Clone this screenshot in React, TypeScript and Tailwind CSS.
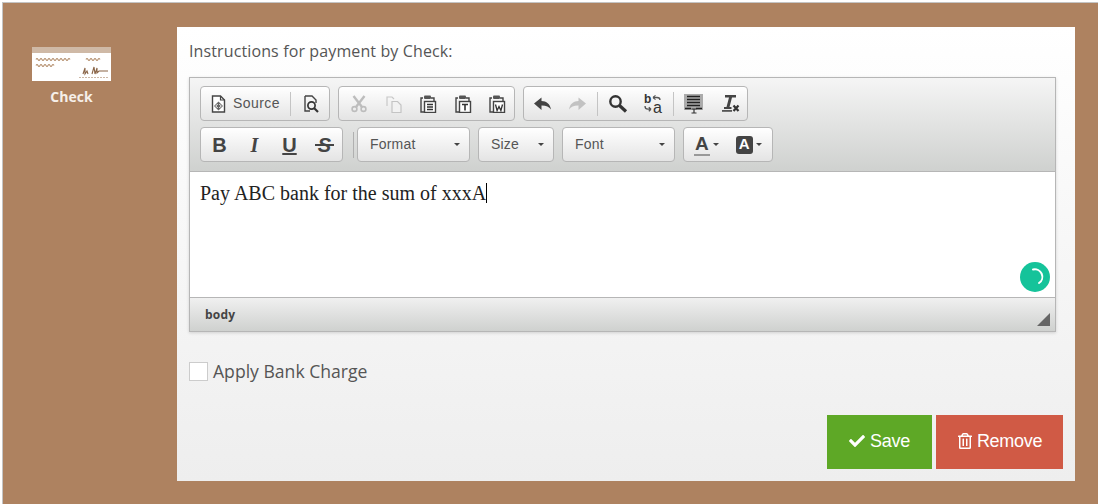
import type { ReactNode } from 'react';
import { FaCheck, FaRegTrashAlt } from 'react-icons/fa';

const groupClass =
  'flex h-[35px] items-center rounded-[4px] border border-[#b6b6b6] bg-gradient-to-b from-white to-[#e4e4e4]';

function Ico({ children, w = 18, h = 18, className = '' }: { children: ReactNode; w?: number; h?: number; className?: string }) {
  return (
    <svg width={w} height={h} viewBox={`0 0 ${w} ${h}`} className={`shrink-0 ${className}`}>
      {children}
    </svg>
  );
}

function Sep() {
  return <div className="h-[24px] w-px bg-[#c4c4c4]" />;
}

function SourceIcon() {
  return (
    <Ico w={15} h={18}>
      <path d="M1.5 1h8l4 4v12h-12z" fill="#fff" stroke="#444" strokeWidth="1.4" />
      <path d="M9.5 1v4h4" fill="none" stroke="#444" strokeWidth="1.2" />
      <path d="M7.5 6.5l4.5 4.5-4.5 4.5-4.5-4.5z" fill="#666" />
      <path d="M6.7 9l-2 2 2 2M8.3 9l2 2-2 2" fill="none" stroke="#fff" strokeWidth="1" />
    </Ico>
  );
}

function PreviewIcon() {
  return (
    <Ico w={18} h={18}>
      <path d="M3 1h7l4 4v3M3 1v15h5" fill="none" stroke="#444" strokeWidth="1.4" />
      <circle cx="9.5" cy="10.5" r="3.6" fill="none" stroke="#333" strokeWidth="1.7" />
      <path d="M12 13l4 4" stroke="#333" strokeWidth="2.2" />
    </Ico>
  );
}

function CutIcon() {
  return (
    <Ico>
      <path d="M3.5 1l8.5 11M14.5 1L6 12" stroke="#bdbdbd" strokeWidth="2.4" />
      <circle cx="4.5" cy="14" r="2.4" fill="none" stroke="#bdbdbd" strokeWidth="1.6" />
      <circle cx="13.5" cy="14" r="2.4" fill="none" stroke="#bdbdbd" strokeWidth="1.6" />
    </Ico>
  );
}

function CopyIcon() {
  return (
    <Ico>
      <path d="M2 11V2h5l2 2" fill="none" stroke="#c8c8c8" strokeWidth="1.2" />
      <path d="M7 6.5h5.5l3.5 3.5v7.5h-9z" fill="#f2f2f2" stroke="#c4c4c4" strokeWidth="1.2" />
    </Ico>
  );
}

function PasteIcon({ mark }: { mark: 'lines' | 'T' | 'W' }) {
  return (
    <Ico>
      <path d="M4 3H2v14h3" fill="none" stroke="#444" strokeWidth="1.4" />
      <path d="M12 3h3v3" fill="none" stroke="#444" strokeWidth="1.4" />
      <rect x="5" y="0.5" width="7" height="3.5" rx="1" fill="#555" />
      <rect x="5.5" y="6.5" width="11" height="11" fill="#fff" stroke="#444" strokeWidth="1.4" />
      {mark === 'lines' && <path d="M8 9.5h6M8 12h6M8 14.5h6" stroke="#333" strokeWidth="1.3" />}
      {mark === 'T' && <path d="M8 9.5h6M11 9.5v6" stroke="#333" strokeWidth="1.6" />}
      {mark === 'W' && <path d="M7.5 9.5l1.6 6 1.9-4 1.9 4 1.6-6" fill="none" stroke="#333" strokeWidth="1.3" />}
    </Ico>
  );
}

function UndoIcon({ color, flip = false }: { color: string; flip?: boolean }) {
  return (
    <Ico w={19} className={flip ? '-scale-x-100' : ''}>
      <path d="M1 8.5L8.5 2.5v3.6c5 0 8.5 3 9.500 8.400-2-2.900-5-4.200-9.500-4.100V15z" fill={color} />
    </Ico>
  );
}

function FindIcon() {
  return (
    <Ico w={20} h={19}>
      <circle cx="7.5" cy="7.5" r="5.2" fill="none" stroke="#333" strokeWidth="2.4" />
      <path d="M11.5 11.5l6.500 6" stroke="#333" strokeWidth="3.2" />
    </Ico>
  );
}

function ReplaceIcon() {
  return (
    <Ico w={20} h={22}>
      <text x="1" y="10" fontSize="12" fontWeight="700" fontFamily="Liberation Sans" fill="#333">b</text>
      <text x="10" y="20" fontSize="16" fontFamily="Liberation Sans" fill="#333">a</text>
      <path d="M10 4.5h4c2 0 3 .8 3 2.500" fill="none" stroke="#555" strokeWidth="1.3" />
      <path d="M10 4.5l2.500-2.200M10 4.5l2.500 2.200" stroke="#555" strokeWidth="1.1" />
      <path d="M2 13c0 2.200 1 3.200 3 3.200h3M8 16.200l-2.200-2M8 16.200l-2.200 2" fill="none" stroke="#555" strokeWidth="1.3" />
    </Ico>
  );
}

function SelectAllIcon() {
  return (
    <Ico w={19} h={20}>
      <rect x="0" y="0" width="19" height="16" fill="#ababab" />
      <path d="M3 2.5h13M3 5.5h13M3 8.5h13M3 11.500h13M1 14.500h6M12 14.500h6" stroke="#222" strokeWidth="1.5" />
      <path d="M7.5 15h5M10 15v4M7.5 19h5" stroke="#333" strokeWidth="1.2" />
    </Ico>
  );
}

function RemoveFormatIcon() {
  return (
    <Ico w={19} h={19}>
      <path d="M4 1h11v2.500h-4L8.500 13h2v2H3v-2h2.500L8 3.500H4z" fill="#444" />
      <rect x="1" y="16" width="10" height="1.8" fill="#555" />
      <path d="M12.500 11.500l5 5.500M17.500 11.500l-5 5.500" stroke="#333" strokeWidth="2.2" />
    </Ico>
  );
}

function StyleGlyph({ children, className = '' }: { children: ReactNode; className?: string }) {
  return (
    <span className={`flex w-[35px] justify-center text-[20px] font-bold leading-none text-[#444] ${className}`}>
      {children}
    </span>
  );
}

function Caret() {
  return <span className="block h-0 w-0 border-x-[3.5px] border-t-[3px] border-x-transparent border-t-[#444]" />;
}

function Combo({ label, width }: { label: string; width: string }) {
  return (
    <div className={`${groupClass} justify-between pl-[12px] pr-[9px] text-[14px] tracking-[0.2px] text-[#555] ${width}`}>
      <span>{label}</span>
      <Caret />
    </div>
  );
}

export default function App() {
  return (
    <div className="h-[504px] w-[1100px] overflow-hidden bg-white pl-[2px] pr-[2px] pt-[2px]">
      <div className="flex h-[502px] border-l border-t border-[#c4c4c4] bg-[#ae8260] pt-[24px]">
        <div className="w-[174px] shrink-0 pl-[29px] pt-[20px]">
          <div className="flex w-[79px] flex-col">
            <svg width="79" height="34" viewBox="0 0 79 34" className="bg-white">
              <rect width="79" height="6" fill="#cfb9a6" />
              <path
                d="M4 12.5q1-2 2 0t2 0 2 0 2 0 2 0 2 0 2 0 2 0 2 0 2 0 2 0 2 0 2 0 2 0 2 0 2 0 2 0M4 18.5q1-2 2 0t2 0 2 0 2 0 2 0 2 0 2 0 2 0 2 0M54 12.5q1-2 2 0t2 0 2 0 2 0 2 0 2 0 2 0"
                fill="none"
                stroke="#b5906f"
                strokeWidth="1.1"
              />
              <path d="M51 27l2-6 0 6 2-3 1 3M60 27l2-7 1 7 2-6 0 5 2-2h9" fill="none" stroke="#8a6547" strokeWidth="1.1" />
              <path d="M47 30.5h30" stroke="#cdb7a4" strokeWidth="1" strokeDasharray="2 1" />
            </svg>
            <div className="mt-[6px] text-center font-['Open_Sans',sans-serif] text-[14px] font-bold leading-[20px] text-[#f6efe9]">
              Check
            </div>
          </div>
        </div>

        <div className="flex h-[454px] w-[898px] shrink-0 flex-col bg-gradient-to-b from-white to-[#eeeeee] pl-[12px] pr-[12px] font-['Open_Sans',sans-serif]">
          <div className="pt-[13px] text-[16px] leading-[22px] tracking-[0.12px] text-[#555]">Instructions for payment by Check:</div>

          <div className="mt-[15px] flex h-[255px] w-[867px] flex-col border border-[#b6b6b6] font-['Liberation_Sans',sans-serif] shadow-[0_1px_3px_rgba(0,0,0,0.15)]">
            <div className="flex h-[94px] flex-col gap-[6px] border-b border-[#b6b6b6] bg-gradient-to-b from-[#f5f5f5] to-[#cfd1cf] pl-[10px] pt-[8px]">
              <div className="flex gap-[8px]">
                <div className={`${groupClass} w-[130px] pl-[10px]`}>
                  <SourceIcon />
                  <span className="ml-[7px] text-[14px] tracking-[0.45px] text-[#555]">Source</span>
                  <div className="ml-[10px] mr-[11px]"><Sep /></div>
                  <PreviewIcon />
                </div>
                <div className={`${groupClass} w-[177px] justify-between pl-[11px] pr-[8px]`}>
                  <CutIcon />
                  <CopyIcon />
                  <PasteIcon mark="lines" />
                  <PasteIcon mark="T" />
                  <PasteIcon mark="W" />
                </div>
                <div className={`${groupClass} w-[225px] pl-[9px]`}>
                  <UndoIcon color="#444" />
                  <div className="ml-[16px]"><UndoIcon color="#c2c2c2" flip /></div>
                  <div className="ml-[10px]"><Sep /></div>
                  <div className="ml-[10px]"><FindIcon /></div>
                  <div className="ml-[15px]"><ReplaceIcon /></div>
                  <div className="ml-[10px]"><Sep /></div>
                  <div className="ml-[10px]"><SelectAllIcon /></div>
                  <div className="ml-[18px]"><RemoveFormatIcon /></div>
                </div>
              </div>
              <div className="flex gap-[8px]">
                <div className={`${groupClass} w-[143px] pl-[1px]`}>
                  <StyleGlyph>B</StyleGlyph>
                  <StyleGlyph className="font-['Liberation_Serif',serif] italic">I</StyleGlyph>
                  <StyleGlyph className="underline">U</StyleGlyph>
                  <StyleGlyph>
                    <span className="relative italic">
                      S
                      <span className="absolute left-[-3px] right-[-3px] top-[9px] h-[2px] bg-[#444]" />
                    </span>
                  </StyleGlyph>
                </div>
                <div className="ml-[2px] mr-[-8px] h-[26px] w-px self-center bg-[#b0b0b0]" />
                <div className="ml-[3px]">
                  <Combo label="Format" width="w-[113px]" />
                </div>
                <Combo label="Size" width="w-[76px]" />
                <Combo label="Font" width="w-[113px]" />
                <div className={`${groupClass} w-[90px] pl-[10px]`}>
                  <span className="border-b-2 border-[#999] px-[1px] text-[19px] font-bold leading-[20px] text-[#444]">A</span>
                  <span className="ml-[3px]"><Caret /></span>
                  <span className="ml-[17px] flex h-[18px] w-[17px] items-center justify-center rounded-[3px] bg-[#444] text-[15px] font-bold text-white">A</span>
                  <span className="ml-[3px]"><Caret /></span>
                </div>
              </div>
            </div>

            <div className="relative h-[125px] bg-white pl-[10px] pt-[8px] font-['Liberation_Serif',serif] text-[20px] leading-[22px] text-[#222]">
              <span>Pay ABC bank for the sum of xxxA</span>
              <span className="inline-block h-[20px] w-px translate-y-[3px] bg-black" />
              <div className="absolute bottom-[5px] right-[5px] flex h-[30px] w-[30px] items-center justify-center rounded-full bg-[#15c39a]">
                <svg width="20" height="20" viewBox="0 0 20 20">
                  <path d="M8 2.5a7.5 7.5 0 0 1 6 13.500" fill="none" stroke="#fff" strokeWidth="2" strokeLinecap="round" />
                </svg>
              </div>
            </div>

            <div className="relative flex h-[34px] items-center border-t border-[#b6b6b6] bg-gradient-to-b from-[#f0f0f0] to-[#cfd1cf] pl-[15px] font-['Open_Sans',sans-serif] text-[12px] font-bold tracking-[0.2px] text-[#444]">
              body
              <svg width="13" height="13" viewBox="0 0 13 13" className="absolute bottom-[5px] right-[5px]">
                <path d="M13 0v13H0z" fill="#666" />
              </svg>
            </div>
          </div>

          <label className="mt-[27px] flex items-center gap-[5px] text-[17.6px] leading-[24px] text-[#555]">
            <span className="h-[19px] w-[19px] border border-[#ccc] bg-white" />
            Apply Bank Charge
          </label>

          <div className="mt-[32px] flex justify-end gap-[4px]">
            <button type="button" className="flex h-[54px] w-[105px] items-center justify-center gap-[5px] bg-[#5ea826] pb-[2px] font-['Liberation_Sans',sans-serif] text-[18px] tracking-[-0.3px] text-white">
              <FaCheck size={16} />
              Save
            </button>
            <button type="button" className="flex h-[54px] w-[127px] items-center justify-center gap-[4px] bg-[#d05a45] pb-[2px] font-['Liberation_Sans',sans-serif] text-[18px] tracking-[-0.3px] text-white">
              <FaRegTrashAlt size={16} />
              Remove
            </button>
          </div>
        </div>
      </div>
    </div>
  );
}
